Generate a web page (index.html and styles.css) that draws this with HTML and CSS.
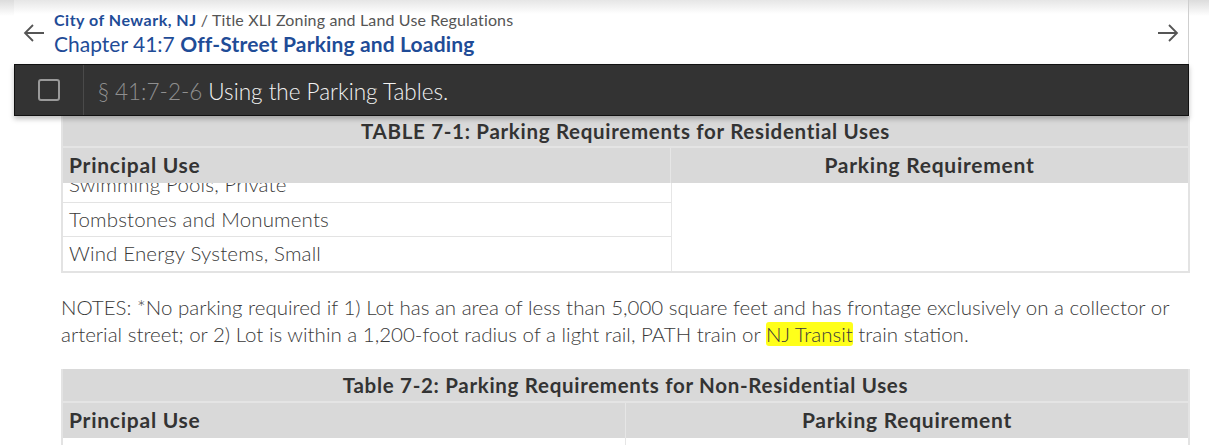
FILE: index.html
```html
<!DOCTYPE html>
<html>
<head>
<meta charset="utf-8">
<link rel="stylesheet" href="styles.css">
</head>
<body>
<div class="page">
  <header class="crumbs">
    <svg class="arrow" width="22" height="20" viewBox="0 0 22 20"><path d="M21 10H2M10 2L2 10l8 8" fill="none" stroke="#555" stroke-width="1.8"/></svg>
    <div class="titles">
      <div class="line1"><a class="city">City of Newark, NJ</a><span class="sep"> / Title XLI Zoning and Land Use Regulations</span></div>
      <div class="line2">Chapter 41:7 <b>Off-Street Parking and Loading</b></div>
    </div>
    <svg class="arrow right" width="22" height="20" viewBox="0 0 22 20"><path d="M1 10h19M12 2l8 8-8 8" fill="none" stroke="#555" stroke-width="1.8"/></svg>
  </header>
  <div class="section-bar">
    <div class="check"><span class="box"></span></div>
    <div class="sec-title"><span class="num">§ 41:7-2-6</span> Using the Parking Tables.</div>
  </div>
  <div class="content">
    <div class="table t1">
      <div class="caption">TABLE 7-1: Parking Requirements for Residential Uses</div>
      <div class="row head">
        <div class="cell c1">Principal Use</div>
        <div class="cell c2 center">Parking Requirement</div>
      </div>
      <div class="body">
        <div class="col1">
          <div class="cell clipped"><span>Swimming Pools, Private</span></div>
          <div class="cell">Tombstones and Monuments</div>
          <div class="cell last">Wind Energy Systems, Small</div>
        </div>
        <div class="col2"></div>
      </div>
    </div>
    <p class="notes">NOTES: *No parking required if 1) Lot has an area of less than 5,000 square feet and has frontage exclusively on a collector or arterial street; or 2) Lot is within a 1,200-foot radius of a light rail, PATH train or <mark>NJ Transit</mark> train station.</p>
    <div class="table t2">
      <div class="caption">Table 7-2: Parking Requirements for Non-Residential Uses</div>
      <div class="row head">
        <div class="cell c1">Principal Use</div>
        <div class="cell c2 center">Parking Requirement</div>
      </div>
      <div class="row blank">
        <div class="cell c1"></div>
        <div class="cell c2"></div>
      </div>
    </div>
  </div>
</div>
</body>
</html>
```

FILE: styles.css
```css
html, body {
  margin: 0;
  padding: 0;
}
body {
  width: 1209px;
  height: 445px;
  overflow: hidden;
  background: linear-gradient(#dcdcdc, #ffffff 16px) no-repeat #fff;
  font-family: "Lato", "Open Sans", sans-serif;
  color: #3a3a3a;
}
.page {
  position: relative;
}
.crumbs {
  margin-left: 14px;
  width: 1175px;
  height: 64px;
  border-right: 1px solid #cfcfcf;
  background: linear-gradient(#e6e6e6, #ffffff 14px);
  display: flex;
  align-items: center;
  box-sizing: border-box;
}
.arrow {
  margin-left: 9px;
  margin-top: 2px;
  flex: none;
}
.arrow.right {
  margin-left: auto;
  margin-right: 9px;
}
.titles {
  margin-left: 9px;
  margin-top: 2px;
}
.line1 {
  font-size: 16px;
  line-height: 20px;
  letter-spacing: 0.15px;
}
.city {
  color: #1f4c97;
  font-weight: 700;
  letter-spacing: 0.5px;
}
.sep {
  color: #555;
}
.line2 {
  font-size: 21px;
  line-height: 27px;
  color: #1f4c97;
}
.line2 b {
  font-weight: 700;
  letter-spacing: 0.15px;
}
.section-bar {
  position: relative;
  z-index: 2;
  margin-left: 14px;
  width: 1175px;
  height: 52px;
  box-sizing: border-box;
  background: #333;
  border: 1px solid #111;
  display: flex;
  align-items: stretch;
  box-shadow: 0 3px 5px rgba(0,0,0,0.25);
}
.check {
  width: 68px;
  border-right: 1px solid #4a4a4a;
  display: flex;
  align-items: center;
  justify-content: center;
}
.box {
  width: 18px;
  height: 18px;
  border: 2px solid #9a9a9a;
  border-radius: 3px;
}
.sec-title {
  padding-left: 14px;
  display: flex;
  align-items: center;
  font-size: 22.5px;
  font-weight: 300;
  color: #f2f2f2;
  padding-top: 2px;
}
.num {
  color: #8f8f8f;
  margin-right: 6px;
}
.content {
  margin-left: 61px;
  width: 1129px;
}
.table {
  border: 2px solid #e3e3e3;
  border-top: none;
  box-sizing: border-box;
}
.caption {
  background: #d9d9d9;
  height: 32px;
  line-height: 30px;
  text-align: center;
  font-weight: 700;
  font-size: 20.5px;
  letter-spacing: 0.7px;
  color: #333;
  border-bottom: 2px solid #e4e4e4;
  box-sizing: border-box;
}
.row {
  display: flex;
}
.head {
  background: #d9d9d9;
  height: 35px;
  font-weight: 700;
  color: #333;
}
.cell {
  font-size: 20.5px;
  font-weight: 300;
  padding-left: 6px;
  box-sizing: border-box;
  letter-spacing: 0.15px;
}
.head .cell {
  font-weight: 700;
  line-height: 34px;
  font-size: 21px;
  letter-spacing: 0.75px;
}
.t1 .c1 { width: 608px; border-right: 1px solid #e6e6e6; }
.t1 .c2 { flex: 1; }
.t2 .c1 { width: 563px; border-right: 1px solid #e6e6e6; }
.t2 .c2 { flex: 1; }
.center { text-align: center; padding-left: 0; }
.body {
  display: flex;
}
.col1 {
  width: 608px;
  border-right: 1px solid #e6e6e6;
}
.col2 { flex: 1; }
.col1 .cell {
  height: 34px;
  line-height: 33px;
  border-bottom: 1px solid #e3e3e3;
}
.col1 .cell.last {
  border-bottom: none;
}
.col1 .clipped {
  height: 20px;
  overflow: hidden;
  line-height: 20px;
}
.clipped span {
  display: block;
  margin-top: -15px;
  line-height: 33px;
}
.t1 {
  border-bottom: 2px solid #e3e3e3;
}
.notes {
  margin: 21px 0 0 0;
  font-size: 20.5px;
  font-weight: 300;
  line-height: 27px;
  color: #3a3a3a;
  width: 1130px;
}
mark {
  background: #ffff1a;
  color: #3a3a3a;
  border-radius: 3px;
}
.t2 {
  margin-top: 21px;
}
.t2 .caption {
  height: 34px;
  line-height: 33px;
}
.blank {
  height: 10px;
}
```
